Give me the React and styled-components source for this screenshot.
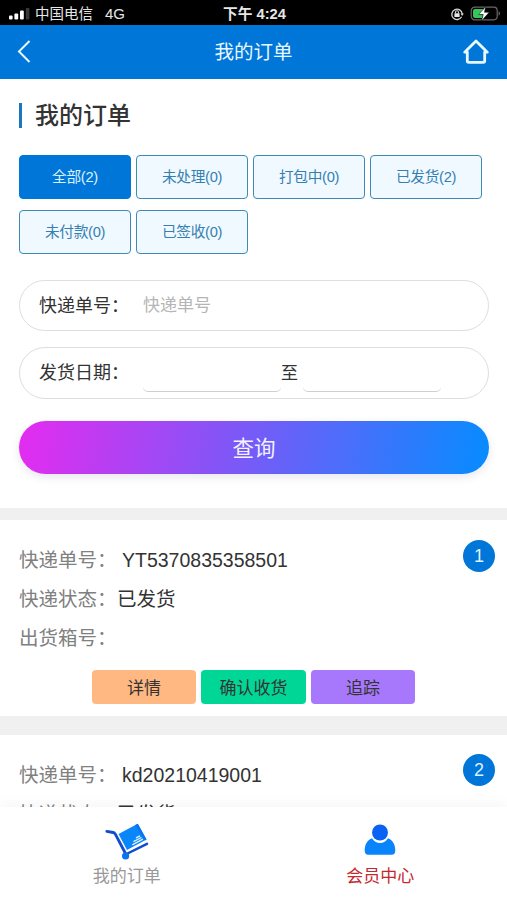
import React from 'react';
import styled, { createGlobalStyle } from 'styled-components';

const GlobalStyle = createGlobalStyle`
  * {
    box-sizing: border-box;
  }

  body {
    margin: 0;
    background: #fff;
    color: #333;
    font-family: 'Liberation Sans', 'Noto Sans CJK SC', sans-serif;
  }

  button, input {
    font-family: inherit;
  }
`;

const Screen = styled.div`
  width: 507px;
  height: 900px;
  display: flex;
  flex-direction: column;
  overflow: hidden;
  background: #fff;
`;

const StatusBar = styled.div`
  flex: none;
  height: 25px;
  padding: 2px 6px 0 9px;
  display: grid;
  grid-template-columns: 1fr auto 1fr;
  align-items: center;
  background: #000;
  color: #e6e6e6;
  font-size: 14.5px;
  line-height: 22px;
`;

const StatusGroup = styled.div`
  display: flex;
  align-items: center;
  justify-content: ${({ $end }) => ($end ? 'flex-end' : 'flex-start')};
  gap: ${({ $end }) => ($end ? '6px' : '5px')};
  white-space: nowrap;
`;

const Network = styled.span`
  margin-left: 7px;
  font-size: 15px;
`;

const Clock = styled.span`
  margin-right: 1px;
  font-weight: 700;
  font-size: 14.7px;
`;

const Header = styled.header`
  flex: none;
  height: 54px;
  padding: 0 17px;
  display: grid;
  grid-template-columns: 28px 1fr 28px;
  align-items: center;
  background: #0076d8;
  color: #e8f8ff;
`;

const HeaderTitle = styled.h1`
  margin: 0;
  text-align: center;
  font-size: 19.5px;
  font-weight: 400;
  line-height: 28px;
`;

const IconButton = styled.button`
  display: flex;
  padding: 0;
  border: 0;
  background: none;
  color: inherit;
`;

const Main = styled.main`
  flex: 1;
  min-height: 0;
  overflow: hidden;
`;

const Panel = styled.section`
  height: 429px;
  padding: 24px 18px 0 19px;
`;

const SectionTitle = styled.h2`
  margin: 0;
  display: flex;
  align-items: center;
  gap: 13px;
  height: 25px;
  font-size: 24px;
  font-weight: 500;
  line-height: 25px;

  &::before {
    content: '';
    width: 3px;
    height: 25px;
    background: #1a76bd;
  }
`;

const Tabs = styled.div`
  margin-top: 26.5px;
  display: grid;
  grid-template-columns: repeat(4, 112px);
  grid-auto-rows: 44px;
  gap: 11px 5px;
`;

const Tab = styled.button`
  padding: 0 0 3px;
  border: 1.5px solid ${({ $active }) => ($active ? '#0076d8' : '#3f8ab0')};
  border-radius: 4px;
  background: ${({ $active }) => ($active ? '#0076d8' : '#f0f9ff')};
  color: ${({ $active }) => ($active ? '#d9f2ff' : '#3580b0')};
  font-size: 14.7px;
  letter-spacing: -0.3px;
`;

const Field = styled.label`
  margin-top: ${({ $top }) => $top}px;
  width: 470px;
  height: ${({ $height }) => $height}px;
  padding: 0 18px 0 19px;
  display: flex;
  align-items: center;
  border: 1.5px solid #dedede;
  border-radius: 26px;
`;

const FieldLabel = styled.span`
  flex: none;
  width: 104px;
  padding-bottom: 3px;
  font-size: 18px;
`;

const TextInput = styled.input`
  flex: 1;
  min-width: 0;
  padding: 1px 0 0;
  border: 0;
  outline: 0;
  background: none;
  font-size: 17px;

  &::placeholder {
    color: #b5b5b5;
    opacity: 1;
  }
`;

const DateInput = styled.input`
  width: 138px;
  height: 38px;
  padding: 0 4px;
  border: 0;
  border-bottom: 1px solid #cfcfcf;
  border-radius: 5px;
  background: none;
  font-size: 16px;
`;

const To = styled.span`
  width: 22px;
  padding: 0 5px 3px 0;
  display: flex;
  justify-content: center;
  font-size: 17px;
`;

const SearchButton = styled.button`
  margin-top: 22px;
  width: 470px;
  height: 53px;
  padding: 0 0 2px;
  border: 0;
  border-radius: 27px;
  background: linear-gradient(100deg, #e02df0 2%, #0a8aff 98%);
  box-shadow: 0 3px 9px rgba(60, 60, 130, 0.13);
  color: #f1f2ff;
  font-size: 21.5px;
`;

const Band = styled.div`
  height: ${({ $height }) => $height}px;
  background: #f0f0f0;
`;

const Card = styled.article`
  position: relative;
  height: 196px;
  padding: 20px 19px 0;
`;

const Line = styled.div`
  height: 39px;
  display: flex;
  align-items: center;
  font-size: 19.5px;
`;

const LineLabel = styled.span`
  width: ${({ $wide }) => ($wide ? 103 : 98)}px;
  padding-bottom: 2px;
  color: #808080;
  white-space: nowrap;
`;

const Value = styled.span`
  padding-top: ${({ $lift }) => ($lift ? 0 : 1)}px;
  padding-bottom: ${({ $lift }) => ($lift ? 2 : 0)}px;
`;

const Badge = styled.span`
  position: absolute;
  top: ${({ $top }) => $top}px;
  right: 12px;
  width: 32px;
  height: 32px;
  border-radius: 50%;
  background: #0076d8;
  color: #dcf3ff;
  font-size: 18px;
  line-height: 32px;
  text-align: center;
`;

const Actions = styled.div`
  margin-top: 13px;
  display: flex;
  justify-content: center;
  gap: 5px;
`;

const Action = styled.button`
  width: 104.5px;
  height: 34px;
  padding: 0 0 2px;
  border: 0;
  border-radius: 4px;
  background: ${({ $color }) => $color};
  color: #333;
  font-size: 17px;
`;

const TabBar = styled.nav`
  position: relative;
  flex: none;
  height: 93px;
  display: grid;
  grid-template-columns: 1fr 1fr;
  background: #fff;
  box-shadow: 0 -3px 14px rgba(0, 0, 0, 0.04);
`;

const TabBarItem = styled.a`
  display: flex;
  flex-direction: column;
  align-items: center;
  padding-top: 14px;
  color: ${({ $active }) => ($active ? '#c5282f' : '#999')};
  font-size: 17px;
  line-height: 24px;

  svg {
    margin-bottom: 4px;
  }
`;

const SignalIcon = () => (
  <svg width="21" height="12" viewBox="0 0 21 12">
    <rect x="0" y="7.5" width="3.6" height="4" rx="1" fill="#fff" />
    <rect x="5.4" y="5.5" width="3.8" height="6" rx="1" fill="#fff" />
    <rect x="11" y="2.5" width="3.8" height="9" rx="1" fill="#fff" />
    <rect x="16.8" y="0" width="3.6" height="11.5" rx="1" fill="#383838" />
  </svg>
);

const LockIcon = () => (
  <svg width="14" height="14" viewBox="0 0 14 14" fill="none" stroke="#d6d6d6">
    <path d="M11.6 9.8A5.2 5.2 0 1 1 12.2 7" strokeWidth="1.3" />
    <path d="M10.5 6.5h3.3l-1.6 2.4z" fill="#d6d6d6" stroke="none" />
    <rect x="4.4" y="6.3" width="5.2" height="3.6" rx="0.5" fill="#e8e8e8" stroke="none" />
    <path d="M5.5 6.4V5.2a1.5 1.5 0 0 1 3 0v1.2" strokeWidth="1.1" />
  </svg>
);

const BatteryIcon = () => (
  <svg width="31" height="16" viewBox="0 0 31 16">
    <rect x="1.2" y="1.2" width="26" height="12.6" rx="3.5" fill="none" stroke="#686868" strokeWidth="1.2" />
    <path d="M5 2.9h8.5l-4 6H13l-1 3.2H5a2 2 0 0 1-2-2V4.9a2 2 0 0 1 2-2z" fill="#35c75a" />
    <path d="M28.6 5.3c1.8.4 1.8 4 0 4.4z" fill="#686868" />
    <path d="M15.8.4L8.6 8.6h4.7L11.4 15l7.8-8.700h-4.800z" fill="#fff" stroke="#000" strokeWidth="0.5" />
  </svg>
);

const BackIcon = () => (
  <svg width="16" height="24" viewBox="0 0 16 24" fill="none">
    <path d="M12.5 1L2 11.5 12.5 22" stroke="#e8f8ff" strokeWidth="2" />
  </svg>
);

const HomeIcon = () => (
  <svg width="28" height="26" viewBox="0 0 28 26" fill="none" stroke="#e8f8ff" strokeWidth="2.8" strokeLinejoin="round" strokeLinecap="round">
    <path d="M5.3 13.2H2.7L14 2l11.3 11.2h-2.6V22c0 .9-.5 1.4-1.4 1.4H6.7c-.9 0-1.4-.5-1.4-1.4z" />
  </svg>
);

const CartIcon = () => (
  <svg width="44" height="40" viewBox="0 0 44 40">
    <path d="M13.500 13L31.800 3.200q.9-.5 1.400.4L41.500 18.500 22 29z" fill="#0a86fb" />
    <path d="M31.800 3.200q.9-.5 1.400.4L41.500 18.500l-1.500.9L30.200 4z" fill="#0874ee" />
    <path d="M27.300 23.800l10.500-5.600M28.400 20.700l8-4.200M31 16.900l4-2.100" stroke="#d9f0ff" strokeWidth="1.4" fill="none" />
    <path d="M1.800 10.300l6.400 1.200c1 .2 1.500.6 2 1.400L20.500 32.500" stroke="#124bcc" strokeWidth="2.8" strokeLinecap="round" strokeLinejoin="round" fill="none" />
    <path d="M21.500 33L42 22.800" stroke="#124bcc" strokeWidth="2.5" strokeLinecap="round" />
    <circle cx="20.600" cy="35" r="3.6" fill="#0a73ee" />
  </svg>
);

const MemberIcon = () => (
  <svg width="34" height="40" viewBox="0 0 34 40">
    <path d="M9 17.2c1.8 3.2 4.6 4.8 8 4.8s6.200-1.600 8-4.800c4.500 1.600 7.300 6 7.300 12.300 0 2.800-1.200 4.300-3.600 4.300H5.300c-2.400 0-3.600-1.500-3.600-4.300 0-6.300 2.800-10.700 7.300-12.300z" fill="#0a84fb" />
    <circle cx="17" cy="11.5" r="8" fill="#0a62f3" />
  </svg>
);

const tabs = ['全部(2)', '未处理(0)', '打包中(0)', '已发货(2)', '未付款(0)', '已签收(0)'];

const Order = ({ index, number, status, badgeTop }) => (
  <Card>
    <Badge $top={badgeTop}>{index}</Badge>
    <Line>
      <LineLabel $wide>快递单号：</LineLabel>
      <Value>{number}</Value>
    </Line>
    <Line>
      <LineLabel>快递状态：</LineLabel>
      <Value $lift>{status}</Value>
    </Line>
    <Line>
      <LineLabel>出货箱号：</LineLabel>
    </Line>
    <Actions>
      <Action $color="#ffb881">详情</Action>
      <Action $color="#00d796">确认收货</Action>
      <Action $color="#a878fc">追踪</Action>
    </Actions>
  </Card>
);

const App = () => {
  return (
    <Screen lang="zh-CN">
      <GlobalStyle />
      <StatusBar>
        <StatusGroup>
          <SignalIcon />
          <span>中国电信</span>
          <Network>4G</Network>
        </StatusGroup>
        <Clock>下午 4:24</Clock>
        <StatusGroup $end>
          <LockIcon />
          <BatteryIcon />
        </StatusGroup>
      </StatusBar>
      <Header>
        <IconButton aria-label="返回">
          <BackIcon />
        </IconButton>
        <HeaderTitle>我的订单</HeaderTitle>
        <IconButton aria-label="首页">
          <HomeIcon />
        </IconButton>
      </Header>
      <Main>
        <Panel>
          <SectionTitle>我的订单</SectionTitle>
          <Tabs>
            {tabs.map((tab, i) => (
              <Tab key={tab} $active={i === 0}>
                {tab}
              </Tab>
            ))}
          </Tabs>
          <Field $top={26} $height={51}>
            <FieldLabel>快递单号：</FieldLabel>
            <TextInput placeholder="快递单号" />
          </Field>
          <Field $top={16} $height={52}>
            <FieldLabel>发货日期：</FieldLabel>
            <DateInput />
            <To>至</To>
            <DateInput />
          </Field>
          <SearchButton>查询</SearchButton>
        </Panel>
        <Band $height={12} />
        <Order index={1} number="YT5370835358501" status="已发货" badgeTop={20} />
        <Band $height={19} />
        <Order index={2} number="kd20210419001" status="已发货" badgeTop={19} />
      </Main>
      <TabBar>
        <TabBarItem>
          <CartIcon />
          我的订单
        </TabBarItem>
        <TabBarItem $active>
          <MemberIcon />
          会员中心
        </TabBarItem>
      </TabBar>
    </Screen>
  );
};

export default App;
